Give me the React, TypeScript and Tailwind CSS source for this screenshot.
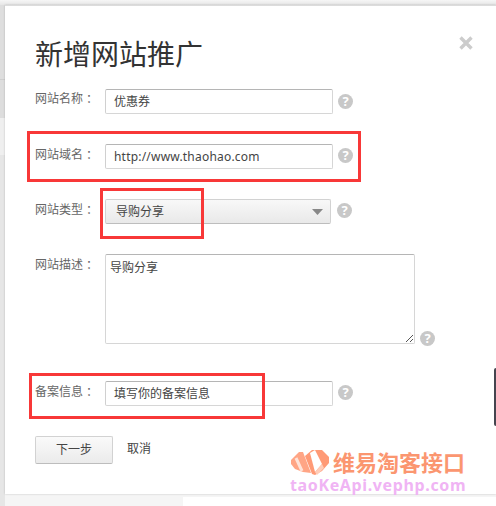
import React from 'react';

const font = { fontFamily: '"Noto Sans", "Noto Sans CJK SC", sans-serif' };

const Help = () => (
  <span className="flex h-[15px] w-[15px] shrink-0 items-center justify-center rounded-full bg-[#c8c8c8] text-[13px] font-bold leading-none text-white">
    ?
  </span>
);

const Label = ({ text, pt = 'pt-[2px]' }: { text: string; pt?: string }) => (
  <label className={`w-[70px] shrink-0 ${pt} text-[12px] leading-[18px] text-[#666]`}>
    {text}
    <span className="ml-[3px]">：</span>
  </label>
);

const Field = ({ label, value, mt, helpMt, latin, labelPt }: { label: string; value: string; mt: string; helpMt: string; latin?: boolean; labelPt?: string }) => (
  <div className={`flex items-start ${mt}`}>
    <Label text={label} pt={labelPt} />
    <div className={`flex h-[25px] w-[228px] items-center rounded-[2px] border border-[#d6d6d6] border-t-[#b5b5b5] border-l-[#d0d0d0] pl-2 text-[12px] text-[#444] ${latin ? 'tracking-[0.2px]' : ''}`}>
      {value}
    </div>
    <div className={`ml-[5px] ${helpMt}`}>
      <Help />
    </div>
  </div>
);

export default function App() {
  return (
    <div className="relative h-[506px] w-[496px] overflow-hidden bg-[#f5f5f5]" style={font}>
      <div className="h-[5px] w-full bg-gradient-to-b from-[#f6f6f6] to-[#e6e6e6]" />

      {/* page behind the dialog, left edge */}
      <div className="absolute bottom-0 left-0 top-[5px] flex w-[5px] flex-col">
        <div className="h-[74px] bg-[#dedede]" />
        <div className="h-[39px] border-t border-[#cfcfcf] bg-[#dddddd]" />
        <div className="h-[37px] bg-[#efefef]" />
        <div className="flex-1 bg-[#e6e6e6]" />
      </div>
      <div className="absolute bottom-0 left-[183px] h-[9px] w-[313px] bg-white" />

      <div className="relative ml-[5px] h-[489px] w-[491px] border-t border-[#dcdcdc] bg-white pl-[30px] shadow-[0_0_2px_rgba(0,0,0,0.2)]">
        <h1 className="pt-[28px] text-[28px] font-normal leading-[40px] text-[#333]">新增网站推广</h1>
        <span className="absolute left-[454px] top-[30px] text-[#cccccc]">
          <svg width="14" height="14" viewBox="0 0 14 14" className="block">
            <path d="M1.5 1.5 L12.5 12.5 M12.5 1.5 L1.5 12.5" stroke="currentColor" strokeWidth="3.4" fill="none" />
          </svg>
        </span>

        <Field label="网站名称" value="优惠券" mt="mt-[15px]" helpMt="mt-[5px]" labelPt="pt-[1px]" />
        <Field label="网站域名" value="http://www.thaohao.com" mt="mt-[30px]" helpMt="mt-[4px]" latin />

        <div className="mt-[30px] flex items-start">
          <Label text="网站类型" />
          <div className="flex h-[25px] w-[226px] items-center justify-between rounded-[2px] border border-[#d2d2d2] border-b-[#bdbdbd] bg-gradient-to-b from-[#f8f8f8] to-[#e9e9e9] pl-[10px] pr-[7px] text-[12px] text-[#444]">
            导购分享
            <svg width="11" height="6" viewBox="0 0 11 6">
              <path d="M0 0 H11 L5.5 6 Z" fill="#888888" />
            </svg>
          </div>
          <div className="ml-[6px] mt-[4px]">
            <Help />
          </div>
        </div>

        <div className="mt-[30px] flex items-start">
          <Label text="网站描述" />
          <div className="relative h-[90px] w-[310px] rounded-[2px] border border-[#d6d6d6] border-t-[#b5b5b5] px-1 pt-[3px] text-[12px] leading-[20px] text-[#444]">
            导购分享
            <svg className="absolute bottom-0 right-0" width="9" height="9" viewBox="0 0 9 9">
              <path d="M1 8 L8 1 M5 8 L8 5" stroke="#555" strokeWidth="1" fill="none" />
            </svg>
          </div>
          <div className="ml-[5px] mt-[77px]">
            <Help />
          </div>
        </div>

        <Field label="备案信息" value="填写你的备案信息" mt="mt-[35px]" helpMt="mt-[4px]" />

        <div className="mt-[30px] flex items-start">
          <button className="h-[28px] w-[78px] rounded-[2px] border border-[#d2d2d2] border-b-[#bdbdbd] bg-gradient-to-b from-[#fafafa] to-[#ebebeb] text-[12px] text-[#444]">
            下一步
          </button>
          <a className="ml-[14px] mt-[4px] text-[12px] leading-[18px] text-[#444]">取消</a>
        </div>
      </div>

      {/* red annotations drawn over the screenshot */}
      <div className="absolute left-[27px] top-[131px] h-[51px] w-[334px] border-[3px] border-[#f83838]" />
      <div className="absolute left-[100px] top-[188px] h-[51px] w-[104px] border-[3px] border-[#f83838]" />
      <div className="absolute left-[29px] top-[373px] h-[46px] w-[236px] border-[3px] border-[#f83838]" />

      <div className="absolute right-0 top-[368px] h-[58px] w-[2px] rounded-l-[2px] bg-[#45454f]" />

      {/* watermark */}
      <div className="absolute left-[291px] top-[449px] flex items-center">
        <svg width="38" height="26" viewBox="0 0 38 26">
          <path d="M0 11 L8 3 L12 3 L20 24 L12 23 L4 20 L0 15 Z" fill="#ffa585" />
          <path d="M5 9 L11 22" stroke="#ffe3d8" strokeWidth="3" />
          <path d="M14 7 L21 1 L31 1 L38 8 L38 14 L31 22 L24 26 L21 25 Z" fill="#ff9a76" />
          <path d="M19 4 L24 1 L31 15 L24 23 Z" fill="#ffffff" />
          <path d="M24 23 L31 15 L33 19 L26 26 Z" fill="#ffcdb9" />
        </svg>
        <span className="ml-[4px] text-[22px] font-bold leading-none text-[#fb9670]">维易淘客接口</span>
      </div>
      <div className="absolute left-[290px] top-[478px] text-[16px] font-bold leading-[14px] tracking-[0.63px] text-[#f0b4f4]">
        taoKeApi.vephp.com
      </div>
    </div>
  );
}
